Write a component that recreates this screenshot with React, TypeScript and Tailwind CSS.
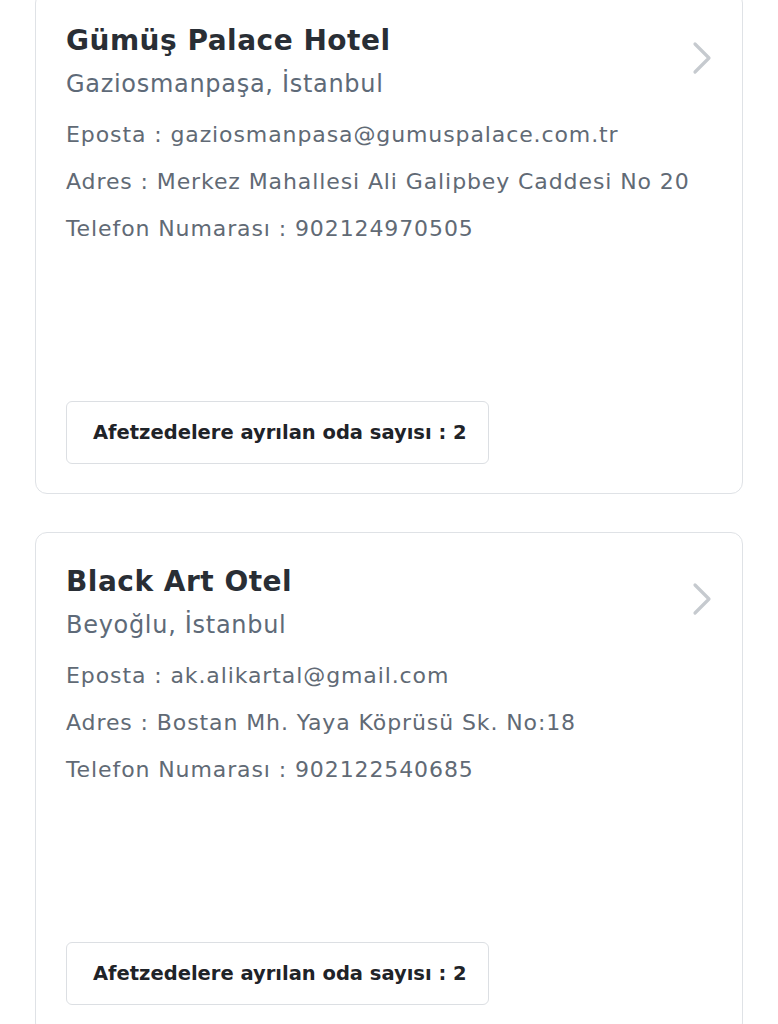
import React from "react";

type Hotel = {
  name: string;
  location: string;
  email: string;
  address: string;
  phone: string;
  rooms: number;
};

const hotels: Hotel[] = [
  {
    name: "Gümüş Palace Hotel",
    location: "Gaziosmanpaşa, İstanbul",
    email: "gaziosmanpasa@gumuspalace.com.tr",
    address: "Merkez Mahallesi Ali Galipbey Caddesi No 20",
    phone: "902124970505",
    rooms: 2,
  },
  {
    name: "Black Art Otel",
    location: "Beyoğlu, İstanbul",
    email: "ak.alikartal@gmail.com",
    address: "Bostan Mh. Yaya Köprüsü Sk. No:18",
    phone: "902122540685",
    rooms: 2,
  },
];

function Chevron() {
  return (
    <svg width="20" height="34" viewBox="0 0 20 34" fill="none" className="shrink-0 mt-[18px]">
      <path d="M3 3 L17 17 L3 31" stroke="#c6cacf" strokeWidth="3.2" strokeLinecap="round" strokeLinejoin="round" />
    </svg>
  );
}

function HotelCard({ hotel }: { hotel: Hotel }) {
  return (
    <div className="h-[503px] flex flex-col border border-[#dfe2e6] rounded-[12px] bg-white pl-[30px] pr-[30px] pt-[31px] pb-[29px]">
      <div className="flex justify-between items-start">
        <div>
          <h2 className="text-[28px] leading-[36px] font-bold tracking-[0.5px] text-[#292e35]">{hotel.name}</h2>
          <p className="mt-[10px] text-[24px] leading-[30px] tracking-[0.7px] text-[#5e6a78]">{hotel.location}</p>
        </div>
        <Chevron />
      </div>
      <div className="mt-[21px] flex flex-col gap-[17px] text-[22px] leading-[30px] tracking-[0.9px] text-[#616a75]">
        <p>Eposta : {hotel.email}</p>
        <p>Adres : {hotel.address}</p>
        <p>Telefon Numarası : {hotel.phone}</p>
      </div>
      <div className="mt-auto">
        <div className="w-[423px] h-[63px] flex items-center border border-[#dcdfe3] rounded-[6px] pl-[26px] text-[19.5px] font-bold text-[#1f2328]">
          Afetzedelere ayrılan oda sayısı : {hotel.rooms}
        </div>
      </div>
    </div>
  );
}

export default function App() {
  return (
    <div className="min-h-screen bg-white overflow-hidden" style={{ fontFamily: '"DejaVu Sans", "Noto Sans", sans-serif' }}>
      <div className="px-[35px] -mt-[9px] flex flex-col gap-[38px]">
        {hotels.map((h) => (
          <HotelCard key={h.name} hotel={h} />
        ))}
      </div>
    </div>
  );
}
